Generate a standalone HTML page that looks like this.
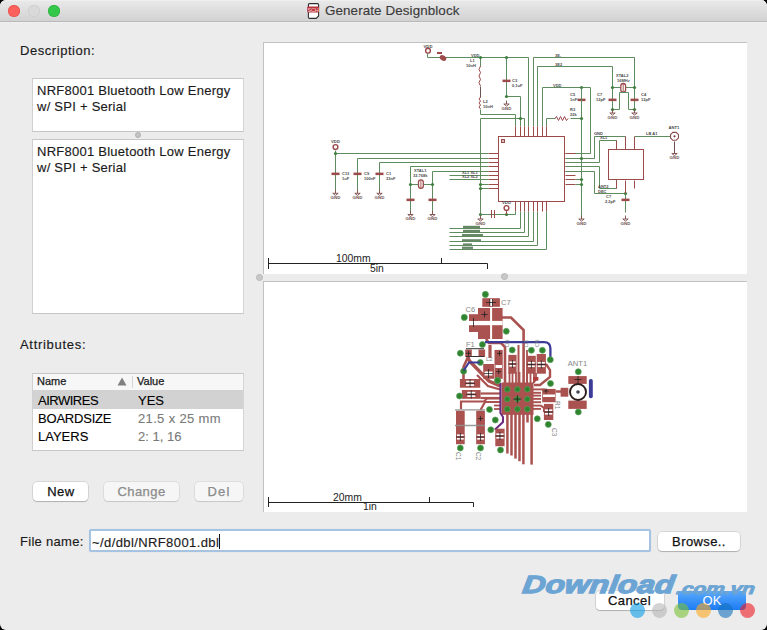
<!DOCTYPE html>
<html><head><meta charset="utf-8">
<style>
*{margin:0;padding:0;box-sizing:border-box}
html,body{width:767px;height:630px;overflow:hidden;background:#000}
body{font-family:"Liberation Sans",sans-serif;position:relative}
#win{position:absolute;left:0;top:0;width:767px;height:630px;background:#ececec;border-radius:6px;overflow:hidden}
#tb{position:absolute;left:0;top:0;width:767px;height:22px;background:linear-gradient(#f1f1f1 0,#e8e8e8 1.5px,#d2d2d2 21px);border-bottom:1px solid #b9b9b9;box-shadow:0 1px 0 #f0f0f0}
.dot{position:absolute;top:5px;width:12px;height:12px;border-radius:50%}
.abs{position:absolute;white-space:pre}
.lbl{font-size:13px;color:#1a1a1a;-webkit-text-stroke:.15px #1a1a1a}
.box{position:absolute;background:#fff;border:1px solid #c6c6c6;border-left-color:#d0d0d0;border-right-color:#d4d4d4}
.btn{position:absolute;background:#fff;border-radius:4px;box-shadow:0 0 0 0.5px rgba(0,0,0,.18),0 1px 1px rgba(0,0,0,.18);font-size:13px;text-align:center;color:#111;-webkit-text-stroke:.25px currentColor}
.btn.dis{background:#f6f6f6;color:#8b8b8b;box-shadow:0 0 0 0.5px rgba(0,0,0,.12),0 1px 1px rgba(0,0,0,.1)}
.panel{position:absolute;background:#fff;border-top:1px solid #c2c2c2;border-left:1px solid #c2c2c2;overflow:hidden}
.panel svg{position:absolute;left:-1px;top:-1px}
.row{position:absolute;left:33px;width:210px;height:18px;font-size:13px}
.row span{position:absolute;top:2px;-webkit-text-stroke:.12px currentColor}
</style></head><body>
<div id="win">
 <div id="tb">
  <div class="dot" style="left:8px;background:#fc605c;box-shadow:inset 0 0 0 .5px #de4a46"></div>
  <div class="dot" style="left:28px;background:#d9d9d9;box-shadow:inset 0 0 0 .5px #c6c6c6"></div>
  <div class="dot" style="left:48px;background:#34c84a;box-shadow:inset 0 0 0 .5px #27a83a"></div>
  <svg class="abs" style="left:305px;top:2px" width="16" height="18" viewBox="0 0 16 18">
   <path d="M4.5 1.6 H12.5 Q13.6 1.6 13.6 2.7 V14 L11.2 16.4 H4.5 Q3.4 16.4 3.4 15.3 V2.7 Q3.4 1.6 4.5 1.6Z" fill="#fff" stroke="#2e2e2e" stroke-width="1.1"/>
   <rect x="2.2" y="4.5" width="11.8" height="6" rx="1" fill="#b8323c"/>
   <text x="8.1" y="9.5" font-size="5.6" font-family="Liberation Sans" fill="#f6d6d8" text-anchor="middle" letter-spacing="-.2">SCH</text>
  </svg>
  <div class="abs" style="left:325px;top:3px;font-size:13.4px;color:#3b3b3b;letter-spacing:.1px;-webkit-text-stroke:.15px #3b3b3b">Generate Designblock</div>
 </div>

 <div class="abs lbl" style="left:20px;top:43px;letter-spacing:.55px">Description:</div>
 <div class="box" style="left:32px;top:78px;width:212px;height:54px"></div>
 <div class="abs lbl" style="left:37px;top:83px;line-height:16px;letter-spacing:.25px">NRF8001 Bluetooth Low Energy
w/ SPI + Serial</div>
 <div class="abs" style="left:135px;top:132px;width:6px;height:6px;border-radius:50%;background:#c4c4c4;border:1px solid #b0b0b0"></div>
 <div class="box" style="left:32px;top:139px;width:212px;height:175px"></div>
 <div class="abs lbl" style="left:37px;top:144px;line-height:16px;letter-spacing:.25px">NRF8001 Bluetooth Low Energy
w/ SPI + Serial</div>

 <div class="abs lbl" style="left:20px;top:337px;letter-spacing:.7px">Attributes:</div>
 <div class="box" style="left:32px;top:373px;width:212px;height:78px"></div>
 <div class="abs" style="left:33px;top:374px;width:210px;height:16px;background:#f7f7f7"></div>
 <div class="abs" style="left:37px;top:375px;font-size:11px;color:#1a1a1a;-webkit-text-stroke:.25px #1a1a1a">Name</div>
 <svg class="abs" style="left:117px;top:377px" width="10" height="9"><path d="M5 0.5 L9.5 8.5 H0.5Z" fill="#808080"/></svg>
 <div class="abs" style="left:132px;top:376px;width:1px;height:12px;background:#d6d6d6"></div>
 <div class="abs" style="left:137px;top:375px;font-size:11px;color:#1a1a1a;-webkit-text-stroke:.25px #1a1a1a">Value</div>
 <div class="row" style="top:390px;height:18.5px;background:#d2d2d2"><span style="left:5px;top:3px;letter-spacing:-.5px">AIRWIRES</span><span style="left:105px;top:3px">YES</span></div>
 <div class="row" style="top:408px"><span style="left:5px;top:3px;letter-spacing:-.2px">BOARDSIZE</span><span style="left:105px;top:3px;color:#7a7a7a;letter-spacing:.35px">21.5 x 25 mm</span></div>
 <div class="row" style="top:426px"><span style="left:5px;top:3px">LAYERS</span><span style="left:105px;top:3px;color:#7a7a7a">2: 1, 16</span></div>

 <div class="btn" style="left:33px;top:482px;width:55px;height:19px;line-height:19px;letter-spacing:.55px;padding-left:1px">New</div>
 <div class="btn dis" style="left:104px;top:482px;width:75px;height:19px;line-height:19px;letter-spacing:.45px">Change</div>
 <div class="btn dis" style="left:195px;top:482px;width:48px;height:19px;line-height:19px;letter-spacing:1.2px">Del</div>

 <div class="panel" style="left:263px;top:42px;width:484px;height:232px">
  <svg width="484" height="232" viewBox="263 42 484 232" font-family="Liberation Sans">
<circle cx="428" cy="50.7" r="2.4" fill="none" stroke="#9c4a4a" stroke-width="1.4"/>
<text x="428" y="47.5" font-size="4.2" font-weight="bold" fill="#4a4a4a" font-family="Liberation Sans" text-anchor="middle">VDD</text>
<path d="M427.5,53.5 L427.5,57.5 L528.5,57.5 L528.5,126.5" fill="none" stroke="#5f8c5f" stroke-width="1"/>
<ellipse cx="443" cy="58" rx="3.5" ry="2.5" fill="#9c4a4a" transform="rotate(30 443 58)"/><rect x="437" y="52" width="5" height="2" fill="#9c4a4a"/>
<path d="M480.5,57.5 L480.5,66.5" fill="none" stroke="#5f8c5f" stroke-width="1"/>
<path d="M480.5,66 q-3,3.3333333333333335 0,6.666666666666667 q-3,3.3333333333333335 0,6.666666666666667 q-3,3.3333333333333335 0,6.666666666666667" fill="none" stroke="#9c4a4a" stroke-width="1"/>
<path d="M480.5,86.5 L480.5,97.5" fill="none" stroke="#6a5555" stroke-width="1"/>
<path d="M480.5,97 q-3,2.0 0,4.0 q-3,2.0 0,4.0 q-3,2.0 0,4.0" fill="none" stroke="#9c4a4a" stroke-width="1"/>
<path d="M480.5,109.5 L480.5,114.5 L515.5,114.5 L515.5,126.5" fill="none" stroke="#5f8c5f" stroke-width="1"/>
<text x="470" y="62" font-size="4" font-weight="bold" fill="#4a4a4a" font-family="Liberation Sans" text-anchor="start">L1</text>
<text x="466" y="67" font-size="4" font-weight="bold" fill="#4a4a4a" font-family="Liberation Sans" text-anchor="start">10nH</text>
<text x="483" y="103" font-size="4" font-weight="bold" fill="#4a4a4a" font-family="Liberation Sans" text-anchor="start">L2</text>
<text x="483" y="108" font-size="4" font-weight="bold" fill="#4a4a4a" font-family="Liberation Sans" text-anchor="start">10nH</text>
<circle cx="480.5" cy="57.5" r="1.6" fill="#3f7f3f"/>
<text x="471" y="56.5" font-size="4" font-weight="bold" fill="#4a4a4a" font-family="Liberation Sans" text-anchor="start">VDD</text>
<path d="M506.5,57.5 L506.5,96.5 L520.5,96.5 L520.5,126.5" fill="none" stroke="#5f8c5f" stroke-width="1"/>
<rect x="502.5" y="79.6" width="8" height="2.5" fill="#9c4a4a"/>
<circle cx="506.5" cy="57.5" r="1.6" fill="#3f7f3f"/>
<circle cx="506.5" cy="96.5" r="1.6" fill="#3f7f3f"/>
<path d="M506.5,100.5 V104.0 M503.8,104.0 H509.2 L506.5,106.1 Z" stroke="#7a4848" stroke-width="0.9" fill="none"/><text x="506.5" y="109.5" font-size="4.4" font-weight="bold" fill="#6a5050" text-anchor="middle" font-family="Liberation Sans">GND</text>
<text x="512" y="82" font-size="4" font-weight="bold" fill="#4a4a4a" font-family="Liberation Sans" text-anchor="start">C3</text>
<text x="512" y="87" font-size="4" font-weight="bold" fill="#4a4a4a" font-family="Liberation Sans" text-anchor="start">0,1uF</text>
<path d="M533.5,57.5 L634.5,57.5 L634.5,109.5" fill="none" stroke="#5f8c5f" stroke-width="1"/>
<path d="M537.5,66.5 L612.5,66.5 L612.5,109.5" fill="none" stroke="#5f8c5f" stroke-width="1"/>
<path d="M542.5,87.5 L590.5,87.5 L590.5,153.5 L565.5,153.5" fill="none" stroke="#5f8c5f" stroke-width="1"/>
<text x="555" y="56.5" font-size="4" font-weight="bold" fill="#4a4a4a" font-family="Liberation Sans" text-anchor="start">3E-</text>
<text x="555" y="65.5" font-size="4" font-weight="bold" fill="#4a4a4a" font-family="Liberation Sans" text-anchor="start">3E2</text>
<text x="553" y="86.5" font-size="4" font-weight="bold" fill="#4a4a4a" font-family="Liberation Sans" text-anchor="start">VDD</text>
<path d="M533.5,57.5 L533.5,126.5" fill="none" stroke="#5f8c5f" stroke-width="1"/>
<path d="M537.5,66.5 L537.5,126.5" fill="none" stroke="#5f8c5f" stroke-width="1"/>
<path d="M542.5,87.5 L542.5,126.5" fill="none" stroke="#5f8c5f" stroke-width="1"/>
<path d="M612.5,87.5 L634.5,87.5" fill="none" stroke="#5f8c5f" stroke-width="1"/>
<rect x="620.8" y="83.5" width="4.8" height="8.6" rx="2.3" fill="#fff" stroke="#9c4a4a" stroke-width="1.3"/><path d="M623.2,84 V92" stroke="#9c4a4a" stroke-width="0.9"/>
<path d="M612.5,109.5 L619.5,109.5 L619.5,92.5 L628.5,92.5 L628.5,109.5 L634.5,109.5" fill="none" stroke="#5f8c5f" stroke-width="1"/>
<rect x="608.5" y="98.6" width="8" height="2.5" fill="#9c4a4a"/>
<rect x="630.5" y="98.6" width="8" height="2.5" fill="#9c4a4a"/>
<rect x="577.5" y="98.6" width="8" height="2.5" fill="#9c4a4a"/>
<circle cx="612.5" cy="87.5" r="1.6" fill="#3f7f3f"/>
<circle cx="634.5" cy="87.5" r="1.6" fill="#3f7f3f"/>
<circle cx="581.5" cy="87.5" r="1.6" fill="#3f7f3f"/>
<circle cx="612.5" cy="109.5" r="1.6" fill="#3f7f3f"/>
<circle cx="634.5" cy="109.5" r="1.6" fill="#3f7f3f"/>
<path d="M612.5,109.5 V113.0 M609.8,113.0 H615.2 L612.5,115.1 Z" stroke="#7a4848" stroke-width="0.9" fill="none"/><text x="612.5" y="118.5" font-size="4.4" font-weight="bold" fill="#6a5050" text-anchor="middle" font-family="Liberation Sans">GND</text>
<path d="M634.5,109.5 V113.0 M631.8,113.0 H637.2 L634.5,115.1 Z" stroke="#7a4848" stroke-width="0.9" fill="none"/><text x="634.5" y="118.5" font-size="4.4" font-weight="bold" fill="#6a5050" text-anchor="middle" font-family="Liberation Sans">GND</text>
<text x="616" y="77" font-size="4" font-weight="bold" fill="#4a4a4a" font-family="Liberation Sans" text-anchor="start">XTAL2</text>
<text x="617" y="82" font-size="4" font-weight="bold" fill="#4a4a4a" font-family="Liberation Sans" text-anchor="start">16MHz</text>
<text x="597" y="96" font-size="4" font-weight="bold" fill="#4a4a4a" font-family="Liberation Sans" text-anchor="start">C7</text>
<text x="596" y="101" font-size="4" font-weight="bold" fill="#4a4a4a" font-family="Liberation Sans" text-anchor="start">12pF</text>
<text x="641" y="96" font-size="4" font-weight="bold" fill="#4a4a4a" font-family="Liberation Sans" text-anchor="start">C4</text>
<text x="641" y="101" font-size="4" font-weight="bold" fill="#4a4a4a" font-family="Liberation Sans" text-anchor="start">12pF</text>
<text x="570" y="96" font-size="4" font-weight="bold" fill="#4a4a4a" font-family="Liberation Sans" text-anchor="start">C5</text>
<text x="570" y="101" font-size="4" font-weight="bold" fill="#4a4a4a" font-family="Liberation Sans" text-anchor="start">1nF</text>
<path d="M581.5,87.5 L581.5,217.5" fill="none" stroke="#5f8c5f" stroke-width="1"/>
<path d="M581.5,215.5 V219.0 M578.8,219.0 H584.2 L581.5,221.1 Z" stroke="#7a4848" stroke-width="0.9" fill="none"/><text x="581.5" y="224.5" font-size="4.4" font-weight="bold" fill="#6a5050" text-anchor="middle" font-family="Liberation Sans">GND</text>
<path d="M546.5,126.5 L546.5,118.5 L555.5,118.5" fill="none" stroke="#5f8c5f" stroke-width="1"/>
<path d="M555,118.5 l1.5,-2 l2,4 l2,-4 l2,4 l2,-4 l2,4 l1.5,-2" fill="none" stroke="#9c4a4a" stroke-width="1"/>
<path d="M570.5,118.5 L581.5,118.5" fill="none" stroke="#5f8c5f" stroke-width="1"/>
<circle cx="581.5" cy="118.5" r="1.6" fill="#3f7f3f"/>
<text x="570" y="111" font-size="4" font-weight="bold" fill="#4a4a4a" font-family="Liberation Sans" text-anchor="start">R3</text>
<text x="570" y="116" font-size="4" font-weight="bold" fill="#4a4a4a" font-family="Liberation Sans" text-anchor="start">22k</text>
<path d="M480.5,118.5 L524.5,118.5 L524.5,126.5" fill="none" stroke="#5f8c5f" stroke-width="1"/>
<circle cx="520.5" cy="118.5" r="1.6" fill="#3f7f3f"/>
<path d="M480.5,118.5 L480.5,214.5" fill="none" stroke="#5f8c5f" stroke-width="1"/>
<rect x="498.5" y="136.5" width="66" height="65" fill="none" stroke="#9c4a4a" stroke-width="1"/>
<rect x="501" y="139" width="4" height="4" fill="#9c4a4a"/><path d="M502,141 h2 M503,140 v2" stroke="#fff" stroke-width="0.8"/>
<path d="M515.5,126.5 L515.5,136.5" fill="none" stroke="#9c4a4a" stroke-width="1"/>
<path d="M520.5,126.5 L520.5,136.5" fill="none" stroke="#9c4a4a" stroke-width="1"/>
<path d="M524.5,126.5 L524.5,136.5" fill="none" stroke="#9c4a4a" stroke-width="1"/>
<path d="M528.5,126.5 L528.5,136.5" fill="none" stroke="#9c4a4a" stroke-width="1"/>
<path d="M533.5,126.5 L533.5,136.5" fill="none" stroke="#9c4a4a" stroke-width="1"/>
<path d="M537.5,126.5 L537.5,136.5" fill="none" stroke="#9c4a4a" stroke-width="1"/>
<path d="M542.5,126.5 L542.5,136.5" fill="none" stroke="#9c4a4a" stroke-width="1"/>
<path d="M546.5,126.5 L546.5,136.5" fill="none" stroke="#9c4a4a" stroke-width="1"/>
<path d="M515.5,201.5 L515.5,211.5" fill="none" stroke="#9c4a4a" stroke-width="1"/>
<path d="M520.5,201.5 L520.5,211.5" fill="none" stroke="#9c4a4a" stroke-width="1"/>
<path d="M524.5,201.5 L524.5,211.5" fill="none" stroke="#9c4a4a" stroke-width="1"/>
<path d="M528.5,201.5 L528.5,211.5" fill="none" stroke="#9c4a4a" stroke-width="1"/>
<path d="M533.5,201.5 L533.5,211.5" fill="none" stroke="#9c4a4a" stroke-width="1"/>
<path d="M537.5,201.5 L537.5,211.5" fill="none" stroke="#9c4a4a" stroke-width="1"/>
<path d="M542.5,201.5 L542.5,211.5" fill="none" stroke="#9c4a4a" stroke-width="1"/>
<path d="M546.5,201.5 L546.5,211.5" fill="none" stroke="#9c4a4a" stroke-width="1"/>
<path d="M488.5,153.5 L498.5,153.5" fill="none" stroke="#9c4a4a" stroke-width="1"/>
<path d="M488.5,158.5 L498.5,158.5" fill="none" stroke="#9c4a4a" stroke-width="1"/>
<path d="M488.5,162.5 L498.5,162.5" fill="none" stroke="#9c4a4a" stroke-width="1"/>
<path d="M488.5,166.5 L498.5,166.5" fill="none" stroke="#9c4a4a" stroke-width="1"/>
<path d="M488.5,171.5 L498.5,171.5" fill="none" stroke="#9c4a4a" stroke-width="1"/>
<path d="M488.5,175.5 L498.5,175.5" fill="none" stroke="#9c4a4a" stroke-width="1"/>
<path d="M488.5,179.5 L498.5,179.5" fill="none" stroke="#9c4a4a" stroke-width="1"/>
<path d="M488.5,184.5 L498.5,184.5" fill="none" stroke="#9c4a4a" stroke-width="1"/>
<path d="M488.5,188.5 L498.5,188.5" fill="none" stroke="#9c4a4a" stroke-width="1"/>
<path d="M565.5,153.5 L575.5,153.5" fill="none" stroke="#9c4a4a" stroke-width="1"/>
<path d="M565.5,158.5 L575.5,158.5" fill="none" stroke="#9c4a4a" stroke-width="1"/>
<path d="M565.5,162.5 L575.5,162.5" fill="none" stroke="#9c4a4a" stroke-width="1"/>
<path d="M565.5,166.5 L575.5,166.5" fill="none" stroke="#9c4a4a" stroke-width="1"/>
<path d="M565.5,171.5 L575.5,171.5" fill="none" stroke="#9c4a4a" stroke-width="1"/>
<path d="M565.5,175.5 L575.5,175.5" fill="none" stroke="#9c4a4a" stroke-width="1"/>
<path d="M565.5,179.5 L575.5,179.5" fill="none" stroke="#9c4a4a" stroke-width="1"/>
<path d="M565.5,184.5 L575.5,184.5" fill="none" stroke="#9c4a4a" stroke-width="1"/>
<path d="M335.5,153.5 L488.5,153.5" fill="none" stroke="#5f8c5f" stroke-width="1"/>
<path d="M357.5,158.5 L488.5,158.5" fill="none" stroke="#5f8c5f" stroke-width="1"/>
<path d="M379.5,162.5 L488.5,162.5" fill="none" stroke="#5f8c5f" stroke-width="1"/>
<path d="M410.5,166.5 L488.5,166.5" fill="none" stroke="#5f8c5f" stroke-width="1"/>
<path d="M432.5,171.5 L488.5,171.5" fill="none" stroke="#5f8c5f" stroke-width="1"/>
<path d="M449.5,175.5 L488.5,175.5" fill="none" stroke="#5f8c5f" stroke-width="1"/>
<path d="M449.5,179.5 L488.5,179.5" fill="none" stroke="#5f8c5f" stroke-width="1"/>
<path d="M480.5,184.5 L488.5,184.5" fill="none" stroke="#5f8c5f" stroke-width="1"/>
<path d="M480.5,188.5 L488.5,188.5" fill="none" stroke="#5f8c5f" stroke-width="1"/>
<circle cx="335.5" cy="147" r="2.4" fill="none" stroke="#9c4a4a" stroke-width="1.4"/>
<text x="335.5" y="143" font-size="4.2" font-weight="bold" fill="#4a4a4a" font-family="Liberation Sans" text-anchor="middle">VDD</text>
<path d="M335.5,150.5 L335.5,190.5" fill="none" stroke="#5f8c5f" stroke-width="1"/>
<rect x="331.5" y="172.6" width="8" height="2.5" fill="#9c4a4a"/>
<path d="M335.5,189.8 V193.3 M332.8,193.3 H338.2 L335.5,195.4 Z" stroke="#7a4848" stroke-width="0.9" fill="none"/><text x="335.5" y="198.8" font-size="4.4" font-weight="bold" fill="#6a5050" text-anchor="middle" font-family="Liberation Sans">GND</text>
<path d="M357.5,158.5 L357.5,190.5" fill="none" stroke="#5f8c5f" stroke-width="1"/>
<rect x="353.5" y="172.6" width="8" height="2.5" fill="#9c4a4a"/>
<path d="M357.5,189.8 V193.3 M354.8,193.3 H360.2 L357.5,195.4 Z" stroke="#7a4848" stroke-width="0.9" fill="none"/><text x="357.5" y="198.8" font-size="4.4" font-weight="bold" fill="#6a5050" text-anchor="middle" font-family="Liberation Sans">GND</text>
<path d="M379.5,162.5 L379.5,190.5" fill="none" stroke="#5f8c5f" stroke-width="1"/>
<rect x="375.5" y="172.6" width="8" height="2.5" fill="#9c4a4a"/>
<path d="M379.5,189.8 V193.3 M376.8,193.3 H382.2 L379.5,195.4 Z" stroke="#7a4848" stroke-width="0.9" fill="none"/><text x="379.5" y="198.8" font-size="4.4" font-weight="bold" fill="#6a5050" text-anchor="middle" font-family="Liberation Sans">GND</text>
<text x="342" y="175" font-size="4" font-weight="bold" fill="#4a4a4a" font-family="Liberation Sans" text-anchor="start">C13</text>
<text x="342" y="180" font-size="4" font-weight="bold" fill="#4a4a4a" font-family="Liberation Sans" text-anchor="start">1uF</text>
<text x="364" y="175" font-size="4" font-weight="bold" fill="#4a4a4a" font-family="Liberation Sans" text-anchor="start">C9</text>
<text x="364" y="180" font-size="4" font-weight="bold" fill="#4a4a4a" font-family="Liberation Sans" text-anchor="start">100nF</text>
<text x="386" y="175" font-size="4" font-weight="bold" fill="#4a4a4a" font-family="Liberation Sans" text-anchor="start">C1</text>
<text x="386" y="180" font-size="4" font-weight="bold" fill="#4a4a4a" font-family="Liberation Sans" text-anchor="start">33nF</text>
<circle cx="335.5" cy="153.5" r="1.6" fill="#3f7f3f"/>
<path d="M410.5,166.5 L410.5,212.5" fill="none" stroke="#5f8c5f" stroke-width="1"/>
<path d="M432.5,171.5 L432.5,212.5" fill="none" stroke="#5f8c5f" stroke-width="1"/>
<path d="M410.5,184.5 L432.5,184.5" fill="none" stroke="#5f8c5f" stroke-width="1"/>
<rect x="418.5" y="179.8" width="4.8" height="8.6" rx="2.3" fill="#fff" stroke="#9c4a4a" stroke-width="1.3"/><path d="M420.9,180.3 V188" stroke="#9c4a4a" stroke-width="0.9"/>
<circle cx="410.5" cy="184.5" r="1.6" fill="#3f7f3f"/>
<circle cx="432.5" cy="184.5" r="1.6" fill="#3f7f3f"/>
<rect x="406.5" y="198.6" width="8" height="2.5" fill="#9c4a4a"/>
<rect x="428.5" y="198.6" width="8" height="2.5" fill="#9c4a4a"/>
<path d="M410.5,211 V214.5 M407.8,214.5 H413.2 L410.5,216.6 Z" stroke="#7a4848" stroke-width="0.9" fill="none"/><text x="410.5" y="220" font-size="4.4" font-weight="bold" fill="#6a5050" text-anchor="middle" font-family="Liberation Sans">GND</text>
<path d="M432.5,211 V214.5 M429.8,214.5 H435.2 L432.5,216.6 Z" stroke="#7a4848" stroke-width="0.9" fill="none"/><text x="432.5" y="220" font-size="4.4" font-weight="bold" fill="#6a5050" text-anchor="middle" font-family="Liberation Sans">GND</text>
<text x="414" y="172" font-size="4" font-weight="bold" fill="#4a4a4a" font-family="Liberation Sans" text-anchor="start">XTAL1</text>
<text x="413" y="177" font-size="4" font-weight="bold" fill="#4a4a4a" font-family="Liberation Sans" text-anchor="start">32.768k</text>
<text x="462" y="174" font-size="4" font-weight="bold" fill="#4a4a4a" font-family="Liberation Sans" text-anchor="start">XL1 XL1</text>
<text x="462" y="178" font-size="4" font-weight="bold" fill="#4a4a4a" font-family="Liberation Sans" text-anchor="start">XL2 XL2</text>
<circle cx="480.5" cy="184.5" r="1.6" fill="#3f7f3f"/>
<circle cx="480.5" cy="188.5" r="1.6" fill="#3f7f3f"/>
<circle cx="480.5" cy="214.5" r="1.6" fill="#3f7f3f"/>
<path d="M515.5,211.5 L515.5,214.5 L480.5,214.5" fill="none" stroke="#5f8c5f" stroke-width="1"/>
<circle cx="506.5" cy="214.5" r="1.6" fill="#3f7f3f"/>
<circle cx="506.5" cy="208" r="2.4" fill="none" stroke="#9c4a4a" stroke-width="1.4"/>
<text x="506.5" y="204" font-size="4.2" font-weight="bold" fill="#4a4a4a" font-family="Liberation Sans" text-anchor="middle">VDD</text>
<path d="M506.5,210.5 L506.5,214.5" fill="none" stroke="#9c4a4a" stroke-width="1"/>
<path d="M491.5,210 V218 M494.5,210 V218" stroke="#9c4a4a" stroke-width="1"/>
<path d="M480.5,215.5 V219.0 M477.8,219.0 H483.2 L480.5,221.1 Z" stroke="#7a4848" stroke-width="0.9" fill="none"/><text x="480.5" y="224.5" font-size="4.4" font-weight="bold" fill="#6a5050" text-anchor="middle" font-family="Liberation Sans">GND</text>
<path d="M520.5,211.5 L520.5,228.5 L449.5,228.5" fill="none" stroke="#5f8c5f" stroke-width="1"/>
<path d="M524.5,211.5 L524.5,232.5 L449.5,232.5" fill="none" stroke="#5f8c5f" stroke-width="1"/>
<path d="M528.5,211.5 L528.5,236.5 L449.5,236.5" fill="none" stroke="#5f8c5f" stroke-width="1"/>
<path d="M533.5,211.5 L533.5,241.5 L449.5,241.5" fill="none" stroke="#5f8c5f" stroke-width="1"/>
<path d="M537.5,211.5 L537.5,245.5 L449.5,245.5" fill="none" stroke="#5f8c5f" stroke-width="1"/>
<path d="M546.5,211.5 L546.5,249.5 L449.5,249.5" fill="none" stroke="#5f8c5f" stroke-width="1"/>
<rect x="463" y="225.8" width="17" height="2.3" fill="#668866"/>
<rect x="463" y="229.8" width="17" height="2.3" fill="#668866"/>
<rect x="462" y="234" width="21" height="2.3" fill="#668866"/>
<rect x="462" y="239.2" width="19" height="2.3" fill="#668866"/>
<rect x="463" y="243.4" width="9" height="2.3" fill="#668866"/>
<rect x="462" y="246.6" width="11" height="2.3" fill="#668866"/>
<path d="M565.5,158.5 L594.5,158.5 L594.5,136.5 L625.5,136.5 L625.5,149.5" fill="none" stroke="#5f8c5f" stroke-width="1"/>
<path d="M565.5,162.5 L599.5,162.5 L599.5,140.5 L616.5,140.5 L616.5,149.5" fill="none" stroke="#5f8c5f" stroke-width="1"/>
<path d="M565.5,166.5 L599.5,166.5 L599.5,188.5 L616.5,188.5 L616.5,179.5" fill="none" stroke="#5f8c5f" stroke-width="1"/>
<path d="M565.5,171.5 L594.5,171.5 L594.5,193.5 L625.5,193.5 L625.5,212.5" fill="none" stroke="#5f8c5f" stroke-width="1"/>
<path d="M575.5,179.5 L581.5,179.5" fill="none" stroke="#5f8c5f" stroke-width="1"/>
<path d="M575.5,184.5 L581.5,184.5" fill="none" stroke="#5f8c5f" stroke-width="1"/>
<circle cx="581.5" cy="158.5" r="1.6" fill="#3f7f3f"/>
<circle cx="581.5" cy="179.5" r="1.6" fill="#3f7f3f"/>
<circle cx="581.5" cy="184.5" r="1.6" fill="#3f7f3f"/>
<circle cx="625.5" cy="193.5" r="1.6" fill="#3f7f3f"/>
<rect x="621.5" y="198.6" width="8" height="2.5" fill="#9c4a4a"/>
<path d="M625.5,215.5 V219.0 M622.8,219.0 H628.2 L625.5,221.1 Z" stroke="#7a4848" stroke-width="0.9" fill="none"/><text x="625.5" y="224.5" font-size="4.4" font-weight="bold" fill="#6a5050" text-anchor="middle" font-family="Liberation Sans">GND</text>
<text x="606" y="198" font-size="4" font-weight="bold" fill="#4a4a4a" font-family="Liberation Sans" text-anchor="start">C7</text>
<text x="605" y="203" font-size="4" font-weight="bold" fill="#4a4a4a" font-family="Liberation Sans" text-anchor="start">2,2pF</text>
<text x="598" y="188" font-size="4" font-weight="bold" fill="#4a4a4a" font-family="Liberation Sans" text-anchor="start">ANT2</text>
<text x="598" y="193" font-size="4" font-weight="bold" fill="#4a4a4a" font-family="Liberation Sans" text-anchor="start">DEC</text>
<rect x="608.5" y="149.5" width="35" height="30" fill="none" stroke="#9c4a4a" stroke-width="1"/>
<path d="M634.5,136.5 L634.5,149.5" fill="none" stroke="#9c4a4a" stroke-width="1"/>
<path d="M634.5,180.5 L634.5,188.5" fill="none" stroke="#9c4a4a" stroke-width="1"/>
<path d="M625.5,136.5 L625.5,149.5" fill="none" stroke="#9c4a4a" stroke-width="1"/>
<path d="M616.5,140.5 L616.5,149.5" fill="none" stroke="#9c4a4a" stroke-width="1"/>
<path d="M616.5,180.5 L616.5,188.5" fill="none" stroke="#9c4a4a" stroke-width="1"/>
<path d="M625.5,180.5 L625.5,193.5" fill="none" stroke="#9c4a4a" stroke-width="1"/>
<path d="M634.5,136.5 L670.5,136.5" fill="none" stroke="#5f8c5f" stroke-width="1"/>
<path d="M678.47,137.95 L676.15,140.27 L672.85,140.27 L670.53,137.95 L670.53,134.65 L672.85,132.33 L676.15,132.33 L678.47,134.65 Z" fill="#fff" stroke="#8a4a4a" stroke-width="1.1"/><circle cx="674.5" cy="136.3" r="1.1" fill="#7a3a3a"/>
<path d="M674.5,141.5 L674.5,152.5" fill="none" stroke="#6a5050" stroke-width="1"/>
<path d="M674.5,150 V153.5 M671.8,153.5 H677.2 L674.5,155.6 Z" stroke="#7a4848" stroke-width="0.9" fill="none"/><text x="674.5" y="159" font-size="4.4" font-weight="bold" fill="#6a5050" text-anchor="middle" font-family="Liberation Sans">GND</text>
<text x="668.5" y="129" font-size="4.2" font-weight="bold" fill="#4a4a4a" font-family="Liberation Sans" text-anchor="start">ANT1</text>
<text x="594" y="135" font-size="4" font-weight="bold" fill="#4a4a4a" font-family="Liberation Sans" text-anchor="start">GND</text>
<text x="600" y="139" font-size="4" font-weight="bold" fill="#4a4a4a" font-family="Liberation Sans" text-anchor="start">XL1</text>
<text x="646" y="135" font-size="4" font-weight="bold" fill="#4a4a4a" font-family="Liberation Sans" text-anchor="start">LB A1</text>
<path d="M268.5,258 V269 M268.5,263.5 H487.5 M441.5,258 V263.5 M487.5,263.5 V269" stroke="#222" stroke-width="1" fill="none"/>
<text x="336" y="262" font-size="10.4" fill="#222" font-family="Liberation Sans">100mm</text>
<text x="370" y="271.5" font-size="10.4" fill="#222" font-family="Liberation Sans">5in</text>
  </svg>
 </div>
 <div class="abs" style="left:256px;top:274px;width:7px;height:7px;border-radius:50%;background:#c8c8c8;border:1px solid #b6b6b6"></div>
 <div class="abs" style="left:501px;top:273px;width:7px;height:7px;border-radius:50%;background:#c8c8c8;border:1px solid #b6b6b6"></div>
 <div class="panel" style="left:263px;top:281px;width:484px;height:231px">
  <svg width="484" height="231" viewBox="263 281 484 231" font-family="Liberation Sans">
<path d="M502,317.5 L511,317.5 L523.6,330 L523.6,383" fill="none" stroke="#a9524f" stroke-width="2.6" stroke-linejoin="miter"/>
<path d="M486,339 L489,343 L501,343 L505,347 L505,383" fill="none" stroke="#a9524f" stroke-width="2.6" stroke-linejoin="miter"/>
<path d="M490,345 L490,358" fill="none" stroke="#a9524f" stroke-width="3.2" stroke-linejoin="miter"/>
<path d="M468,357 L469.5,361 L486,378 L489,381 L500,386" fill="none" stroke="#a9524f" stroke-width="3.4" stroke-linejoin="miter"/>
<path d="M468,357 L463.5,367 L463.5,379" fill="none" stroke="#a9524f" stroke-width="2.6" stroke-linejoin="miter"/>
<path d="M477,375 L488,386 L500,389.5" fill="none" stroke="#a9524f" stroke-width="2.2" stroke-linejoin="miter"/>
<path d="M480.5,393.5 L500,393.5" fill="none" stroke="#a9524f" stroke-width="2.2" stroke-linejoin="miter"/>
<path d="M480.5,398 L500,398" fill="none" stroke="#a9524f" stroke-width="2.2" stroke-linejoin="miter"/>
<path d="M461,409 L461,401.5 L484,401.5 L487,398.5 L500,398.5" fill="none" stroke="#a9524f" stroke-width="2.2" stroke-linejoin="miter"/>
<path d="M480.5,410 L485,402 L500,402" fill="none" stroke="#a9524f" stroke-width="2.2" stroke-linejoin="miter"/>
<path d="M494,405.5 L500,405.5" fill="none" stroke="#a9524f" stroke-width="1.8" stroke-linejoin="miter"/>
<path d="M494,409 L500,409" fill="none" stroke="#a9524f" stroke-width="1.8" stroke-linejoin="miter"/>
<path d="M509.5,372 L509.5,383" fill="none" stroke="#a9524f" stroke-width="1.8" stroke-linejoin="miter"/>
<path d="M512.5,372 L512.5,383" fill="none" stroke="#a9524f" stroke-width="1.8" stroke-linejoin="miter"/>
<path d="M516,372 L516,383" fill="none" stroke="#a9524f" stroke-width="1.8" stroke-linejoin="miter"/>
<path d="M519.5,372 L519.5,383" fill="none" stroke="#a9524f" stroke-width="1.8" stroke-linejoin="miter"/>
<path d="M527,372 L527,383" fill="none" stroke="#a9524f" stroke-width="1.8" stroke-linejoin="miter"/>
<path d="M530.5,372 L530.5,383" fill="none" stroke="#a9524f" stroke-width="1.8" stroke-linejoin="miter"/>
<path d="M534,372 L534,383" fill="none" stroke="#a9524f" stroke-width="1.8" stroke-linejoin="miter"/>
<path d="M518.5,345 L518.5,383" fill="none" stroke="#a9524f" stroke-width="2.0" stroke-linejoin="miter"/>
<path d="M527,350 L527,383" fill="none" stroke="#a9524f" stroke-width="1.8" stroke-linejoin="miter"/>
<path d="M546,364 L550,370 L550,377 L540,385 L534,385" fill="none" stroke="#a9524f" stroke-width="2.4" stroke-linejoin="miter"/>
<path d="M536,373 L536,380 L533,383" fill="none" stroke="#a9524f" stroke-width="1.8" stroke-linejoin="miter"/>
<path d="M507.4,414 L507.4,453.5" fill="none" stroke="#a9524f" stroke-width="2.5" stroke-linejoin="miter"/>
<path d="M511.5,414 L511.5,455.5" fill="none" stroke="#a9524f" stroke-width="2.5" stroke-linejoin="miter"/>
<path d="M515.5,414 L515.5,458.6" fill="none" stroke="#a9524f" stroke-width="2.5" stroke-linejoin="miter"/>
<path d="M519.5,414 L519.5,461.2" fill="none" stroke="#a9524f" stroke-width="2.5" stroke-linejoin="miter"/>
<path d="M523.4,414 L523.4,464.3" fill="none" stroke="#a9524f" stroke-width="2.5" stroke-linejoin="miter"/>
<path d="M527.5,414 L527.5,422.5" fill="none" stroke="#a9524f" stroke-width="2.5" stroke-linejoin="miter"/>
<path d="M531.6,414 L531.6,464.6" fill="none" stroke="#a9524f" stroke-width="2.5" stroke-linejoin="miter"/>
<path d="M533,389.4 L541,389.4" fill="none" stroke="#a9524f" stroke-width="1.9" stroke-linejoin="miter"/>
<path d="M533,392.8 L541,392.8" fill="none" stroke="#a9524f" stroke-width="1.9" stroke-linejoin="miter"/>
<path d="M533,395.6 L541,395.6" fill="none" stroke="#a9524f" stroke-width="1.9" stroke-linejoin="miter"/>
<path d="M533,398.9 L541,398.9" fill="none" stroke="#a9524f" stroke-width="1.9" stroke-linejoin="miter"/>
<path d="M533,402.2 L541,402.2" fill="none" stroke="#a9524f" stroke-width="1.9" stroke-linejoin="miter"/>
<path d="M533,405.6 L541,405.6" fill="none" stroke="#a9524f" stroke-width="1.9" stroke-linejoin="miter"/>
<path d="M533,408.9 L541,408.9" fill="none" stroke="#a9524f" stroke-width="1.9" stroke-linejoin="miter"/>
<path d="M541,389.4 L545,389.4" fill="none" stroke="#a9524f" stroke-width="2" stroke-linejoin="miter"/>
<path d="M541,405.6 L544,408 L544,412" fill="none" stroke="#a9524f" stroke-width="2" stroke-linejoin="miter"/>
<rect x="501.5" y="382.5" width="32.0" height="32.30000000000001" fill="#a9524f" />
<circle cx="507.3" cy="389.3" r="2.8160000000000003" fill="#2f852f" stroke="#5d9f5d" stroke-width="0.7"/>
<circle cx="507.3" cy="399.1" r="2.8160000000000003" fill="#2f852f" stroke="#5d9f5d" stroke-width="0.7"/>
<circle cx="507.3" cy="409.1" r="2.8160000000000003" fill="#2f852f" stroke="#5d9f5d" stroke-width="0.7"/>
<circle cx="517.4" cy="389.3" r="2.8160000000000003" fill="#2f852f" stroke="#5d9f5d" stroke-width="0.7"/>
<circle cx="517.4" cy="399.1" r="2.8160000000000003" fill="#2f852f" stroke="#5d9f5d" stroke-width="0.7"/>
<circle cx="517.4" cy="409.1" r="2.8160000000000003" fill="#2f852f" stroke="#5d9f5d" stroke-width="0.7"/>
<circle cx="527.3" cy="389.3" r="2.8160000000000003" fill="#2f852f" stroke="#5d9f5d" stroke-width="0.7"/>
<circle cx="527.3" cy="399.1" r="2.8160000000000003" fill="#2f852f" stroke="#5d9f5d" stroke-width="0.7"/>
<circle cx="527.3" cy="409.1" r="2.8160000000000003" fill="#2f852f" stroke="#5d9f5d" stroke-width="0.7"/>
<path d="M513.4,399.1 H521.4 M517.4,395.1 V403.1" stroke="#222" stroke-width="0.8"/>
<rect x="482.3" y="298.2" width="17.599999999999966" height="8.600000000000023" fill="#a9524f" />
<rect x="490" y="299" width="2.4" height="7" fill="#fff"/><path d="M489.8,299 V306.5 M492.5,299 V306.5 M486,302.5 H496" stroke="#222" stroke-width="0.8"/>
<rect x="478" y="308" width="24.600000000000023" height="31" fill="#a9524f" />
<rect x="490.1" y="308" width="2" height="31" fill="#fff"/><rect x="478" y="320.9" width="24.6" height="4.3" fill="#fff"/>
<path d="M481.5,314.5 H487.5 M484.5,311.5 V317.5" stroke="#222" stroke-width="0.8"/>
<rect x="469" y="314.2" width="9" height="17.80000000000001" fill="#a9524f" />
<rect x="469" y="321" width="9" height="4.2" fill="#fff"/><path d="M473.5,318 V327" stroke="#222" stroke-width="0.8"/>
<circle cx="485.4" cy="294.4" r="3.08" fill="#2f852f" stroke="#5d9f5d" stroke-width="0.7"/>
<circle cx="464.3" cy="317.4" r="3.08" fill="#2f852f" stroke="#5d9f5d" stroke-width="0.7"/>
<circle cx="506.3" cy="331.3" r="2.992" fill="#2f852f" stroke="#5d9f5d" stroke-width="0.7"/>
<text x="501" y="305" font-size="7.5" fill="#888" font-family="Liberation Sans">C7</text>
<text x="465.5" y="312" font-size="7.5" fill="#888" font-family="Liberation Sans">C6</text>
<rect x="465.2" y="349.5" width="6.600000000000023" height="7.5" fill="#a9524f" />
<rect x="478.5" y="349.5" width="6.600000000000023" height="7.5" fill="#a9524f" />
<path d="M466,348.7 H484 M466,356.5 H484" stroke="#333" stroke-width="1"/>
<path d="M466.0,353.3 H471.0 M468.5,350.8 V355.8" stroke="#222" stroke-width="0.8"/>
<text x="466" y="347" font-size="7.5" fill="#888" font-family="Liberation Sans">F1</text>
<circle cx="460.3" cy="353.2" r="2.992" fill="#2f852f" stroke="#5d9f5d" stroke-width="0.7"/>
<circle cx="482.4" cy="344.6" r="2.992" fill="#2f852f" stroke="#5d9f5d" stroke-width="0.7"/>
<circle cx="480.3" cy="362.5" r="2.992" fill="#2f852f" stroke="#5d9f5d" stroke-width="0.7"/>
<circle cx="463.6" cy="371.2" r="2.992" fill="#2f852f" stroke="#5d9f5d" stroke-width="0.7"/>
<path d="M485,342.2 H544 Q550.4,342.2 550.4,348.6 V358" fill="none" stroke="#3c3c98" stroke-width="2.3"/>
<path d="M463.6,370.5 L469,362.5 H480" fill="none" stroke="#3c3c98" stroke-width="2.2"/>
<path d="M500.4,383 V413 L503,417 V422 L494.8,429.7" fill="none" stroke="#6a2a80" stroke-width="2"/>
<rect x="588.9" y="378.9" width="3.9" height="19.4" rx="1.8" fill="#3c3c98"/>
<rect x="483.2" y="364" width="10.900000000000034" height="14.800000000000011" fill="#a9524f" />
<rect x="484.5" y="371.5" width="8" height="4" fill="#fff"/><path d="M488.5,369 V378 M484,373.6 H493" stroke="#222" stroke-width="0.8"/>
<rect x="494.5" y="349.9" width="8.199999999999989" height="28.900000000000034" fill="#a9524f" />
<path d="M497.0,353.4 H502.0 M499.5,350.9 V355.9" stroke="#222" stroke-width="0.8"/>
<path d="M496.2,371.6 H501.2 M498.7,369.1 V374.1" stroke="#222" stroke-width="0.8"/>
<rect x="495.5" y="365" width="6.5" height="3" fill="#fff"/>
<circle cx="497.6" cy="380.6" r="2.992" fill="#2f852f" stroke="#5d9f5d" stroke-width="0.7"/>
<rect x="508.3" y="354.9" width="8.300000000000011" height="18.80000000000001" fill="#a9524f" /><rect x="509.30000000000007" y="361.4" width="6.300000000000011" height="1.7" fill="#fff"/><rect x="509.30000000000007" y="364.9" width="6.300000000000011" height="1.7" fill="#fff"/><path d="M512.45,360 V368 M508.30000000000007,364 H516.6" stroke="#222" stroke-width="0.8"/>
<rect x="527" y="355.8" width="8.799999999999955" height="17.899999999999977" fill="#a9524f" /><rect x="528.0" y="361.9" width="6.7999999999999545" height="1.7" fill="#fff"/><rect x="528.0" y="365.4" width="6.7999999999999545" height="1.7" fill="#fff"/><path d="M531.4,360.5 V368.5 M527.0,364.5 H535.8" stroke="#222" stroke-width="0.8"/>
<rect x="536.7" y="354" width="9.199999999999932" height="19.69999999999999" fill="#a9524f" /><rect x="537.7" y="361.9" width="7.199999999999932" height="1.7" fill="#fff"/><rect x="537.7" y="365.4" width="7.199999999999932" height="1.7" fill="#fff"/><path d="M541.3,360.5 V368.5 M536.7,364.5 H545.8999999999999" stroke="#222" stroke-width="0.8"/>
<circle cx="512.2" cy="350" r="2.992" fill="#2f852f" stroke="#5d9f5d" stroke-width="0.7"/>
<circle cx="531.4" cy="350.3" r="2.992" fill="#2f852f" stroke="#5d9f5d" stroke-width="0.7"/>
<circle cx="542.4" cy="350.3" r="2.992" fill="#2f852f" stroke="#5d9f5d" stroke-width="0.7"/>
<circle cx="550.3" cy="359.7" r="2.992" fill="#2f852f" stroke="#5d9f5d" stroke-width="0.7"/>
<text x="509" y="347" font-size="6" fill="#888" font-family="Liberation Sans" transform="rotate(-90 509 347)">D3</text>
<text x="528" y="347" font-size="6" fill="#888" font-family="Liberation Sans" transform="rotate(-90 528 347)">D1</text>
<text x="539" y="347" font-size="6" fill="#888" font-family="Liberation Sans" transform="rotate(-90 539 347)">C8</text>
<text x="486" y="361" font-size="6" fill="#888" font-family="Liberation Sans">L2</text>
<rect x="533" y="377" width="5.399999999999977" height="3.6000000000000227" fill="#b03c3c" />
<rect x="459.9" y="379" width="20.30000000000001" height="8.699999999999989" fill="#a9524f" /><rect x="466.04999999999995" y="380.7" width="8" height="1.7" fill="#fff"/><rect x="466.04999999999995" y="384.2" width="8" height="1.7" fill="#fff"/><path d="M470.04999999999995,379.3 V387.3 M465.04999999999995,383.3 H475.04999999999995" stroke="#222" stroke-width="0.8"/>
<rect x="461.9" y="390" width="18.700000000000045" height="8.800000000000011" fill="#a9524f" /><rect x="467.25" y="391.79999999999995" width="8" height="1.7" fill="#fff"/><rect x="467.25" y="395.29999999999995" width="8" height="1.7" fill="#fff"/><path d="M471.25,390.4 V398.4 M466.25,394.4 H476.25" stroke="#222" stroke-width="0.8"/>
<circle cx="459.5" cy="396" r="2.992" fill="#2f852f" stroke="#5d9f5d" stroke-width="0.7"/>
<circle cx="489.5" cy="409.5" r="2.992" fill="#2f852f" stroke="#5d9f5d" stroke-width="0.7"/>
<circle cx="495.3" cy="420" r="2.992" fill="#2f852f" stroke="#5d9f5d" stroke-width="0.7"/>
<circle cx="490.8" cy="429.8" r="2.992" fill="#2f852f" stroke="#5d9f5d" stroke-width="0.7"/>
<circle cx="497.6" cy="380.6" r="2.992" fill="#2f852f" stroke="#5d9f5d" stroke-width="0.7"/>
<rect x="456" y="410.7" width="8.699999999999989" height="33.5" fill="#a9524f" /><rect x="457.0" y="434.4" width="6.699999999999989" height="1.7" fill="#fff"/><rect x="457.0" y="437.9" width="6.699999999999989" height="1.7" fill="#fff"/><path d="M460.35,433 V441 M456.0,437 H464.70000000000005" stroke="#222" stroke-width="0.8"/>
<rect x="476.2" y="410.7" width="8.699999999999989" height="33.5" fill="#a9524f" /><rect x="477.19999999999993" y="434.4" width="6.699999999999989" height="1.7" fill="#fff"/><rect x="477.19999999999993" y="437.9" width="6.699999999999989" height="1.7" fill="#fff"/><path d="M480.54999999999995,433 V441 M476.19999999999993,437 H484.9" stroke="#222" stroke-width="0.8"/>
<path d="M455,409.9 H485 M455,425.5 H485" stroke="#8f8f8f" stroke-width="1.4" opacity=".9"/>
<path d="M478.0,418.6 H483.0 M480.5,416.1 V421.1" stroke="#222" stroke-width="0.8"/>
<circle cx="460.3" cy="448" r="2.992" fill="#2f852f" stroke="#5d9f5d" stroke-width="0.7"/>
<circle cx="480.5" cy="448" r="2.992" fill="#2f852f" stroke="#5d9f5d" stroke-width="0.7"/>
<text x="456" y="452" font-size="6.5" fill="#888" font-family="Liberation Sans" transform="rotate(90 456 452)">C1</text>
<text x="476" y="452" font-size="6.5" fill="#888" font-family="Liberation Sans" transform="rotate(90 476 452)">C2</text>
<rect x="495.3" y="428.7" width="9.300000000000011" height="17.5" fill="#a9524f" /><rect x="496.30000000000007" y="433.4" width="7.300000000000011" height="1.7" fill="#fff"/><rect x="496.30000000000007" y="436.9" width="7.300000000000011" height="1.7" fill="#fff"/><path d="M499.95000000000005,432 V440 M495.30000000000007,436 H504.6" stroke="#222" stroke-width="0.8"/>
<circle cx="500.5" cy="450" r="2.992" fill="#2f852f" stroke="#5d9f5d" stroke-width="0.7"/>
<rect x="542.2" y="388.9" width="13.399999999999977" height="13.300000000000011" fill="#a9524f" />
<rect x="543" y="394.5" width="12" height="2.5" fill="#fff"/>
<path d="M543.5,391 H548.5 M546,388.5 V393.5" stroke="#222" stroke-width="0.8"/>
<rect x="543.9" y="403.9" width="9.399999999999977" height="16.100000000000023" fill="#a9524f" /><rect x="544.8999999999999" y="409.4" width="7.399999999999977" height="1.7" fill="#fff"/><rect x="544.8999999999999" y="412.9" width="7.399999999999977" height="1.7" fill="#fff"/><path d="M548.5999999999999,408 V416 M543.8999999999999,412 H553.3" stroke="#222" stroke-width="0.8"/>
<circle cx="548.3" cy="424.4" r="2.992" fill="#2f852f" stroke="#5d9f5d" stroke-width="0.7"/>
<circle cx="537.3" cy="418.8" r="2.992" fill="#2f852f" stroke="#5d9f5d" stroke-width="0.7"/>
<circle cx="550.5" cy="383.5" r="2.992" fill="#2f852f" stroke="#5d9f5d" stroke-width="0.7"/>
<text x="555" y="401" font-size="6.5" fill="#888" font-family="Liberation Sans" transform="rotate(90 555 401)">R1</text>
<text x="552" y="428" font-size="6.5" fill="#888" font-family="Liberation Sans" transform="rotate(90 552 428)">C3</text>
<path d="M555.6,391.5 L561,391.5" fill="none" stroke="#a9524f" stroke-width="2.5" stroke-linejoin="miter"/>
<rect x="560.6" y="387.8" width="7.699999999999932" height="8.899999999999977" fill="#a9524f" />
<rect x="568.3" y="376.1" width="18.40000000000009" height="7.7999999999999545" fill="#a9524f" />
<rect x="568.3" y="400.6" width="18.40000000000009" height="8.299999999999955" fill="#a9524f" />
<circle cx="578" cy="392" r="8" fill="#fff" stroke="#2a1a1a" stroke-width="1.9"/><circle cx="578" cy="392" r="1.8" fill="#445"/>
<path d="M574.5,379.5 H581.5 M578,376.0 V383.0" stroke="#222" stroke-width="0.8"/>
<circle cx="578.3" cy="371.7" r="2.992" fill="#2f852f" stroke="#5d9f5d" stroke-width="0.7"/>
<circle cx="578.3" cy="412" r="2.992" fill="#2f852f" stroke="#5d9f5d" stroke-width="0.7"/>
<text x="567.8" y="366" font-size="7.6" fill="#888" font-family="Liberation Sans">ANT1</text>
<path d="M268.5,497 V507 M268.5,502.5 H473.5 M429.5,497 V502.5 M473.5,502.5 V507" stroke="#222" stroke-width="1" fill="none"/>
<text x="333" y="500.5" font-size="10.4" fill="#222" font-family="Liberation Sans">20mm</text>
<text x="363" y="510" font-size="10.4" fill="#222" font-family="Liberation Sans">1in</text>
  </svg>
 </div>

 <div class="abs lbl" style="left:20px;top:534px;letter-spacing:.3px">File name:</div>
 <div class="abs" style="left:89px;top:529px;width:562px;height:23px;border:2.6px solid #a7c3e2;border-radius:2px;background:#fff;box-shadow:0 0 1px #c6d8ec"></div>
 <div class="abs lbl" style="left:92px;top:535px;letter-spacing:.4px">~/d/dbl/NRF8001.dbl</div>
 <div class="abs" style="left:219px;top:534px;width:1px;height:15px;background:#111"></div>
 <div class="btn" style="left:658px;top:532px;width:82px;height:19px;line-height:19px;letter-spacing:.4px">Browse..</div>

 <div class="btn" style="left:596px;top:591px;width:68px;height:19px;line-height:19px;letter-spacing:.45px;padding-right:1px">Cancel</div>
 <div class="abs" style="left:678px;top:591px;width:68px;height:19px;border-radius:4px;background:linear-gradient(#5aa9fb,#1c7cf5);color:#fff;font-size:13px;text-align:center;line-height:19px">OK</div>

 <!-- watermark -->
 <div class="abs" style="left:521px;top:569px;font-size:25px;line-height:30px;font-weight:bold;font-style:italic;color:#6ca5d4;transform:scaleX(1.27) skewX(-6deg);transform-origin:0 100%;-webkit-text-stroke:1.3px #6ca5d4">Download</div>
 <div class="abs" style="left:675px;top:579px;font-size:16px;line-height:20px;font-weight:bold;font-style:italic;color:#6ca5d4;transform:scaleX(1.3) skewX(-6deg);transform-origin:0 100%;-webkit-text-stroke:0.9px #6ca5d4">.com.vn</div>
 <div class="abs" style="left:630px;top:603px;width:15px;height:15px;border-radius:50%;background:#0a9ee7;opacity:.6"></div>
 <div class="abs" style="left:652px;top:603px;width:15px;height:15px;border-radius:50%;background:#b6b6b6;opacity:.6"></div>
 <div class="abs" style="left:674px;top:603px;width:15px;height:15px;border-radius:50%;background:#7bc136;opacity:.6"></div>
 <div class="abs" style="left:696px;top:603px;width:15px;height:15px;border-radius:50%;background:#fba822;opacity:.6"></div>
 <div class="abs" style="left:718px;top:603px;width:15px;height:15px;border-radius:50%;background:#1571bc;opacity:.6"></div>
 <div class="abs" style="left:740px;top:603px;width:15px;height:15px;border-radius:50%;background:#ef1d24;opacity:.6"></div>
</div>
</body></html>
